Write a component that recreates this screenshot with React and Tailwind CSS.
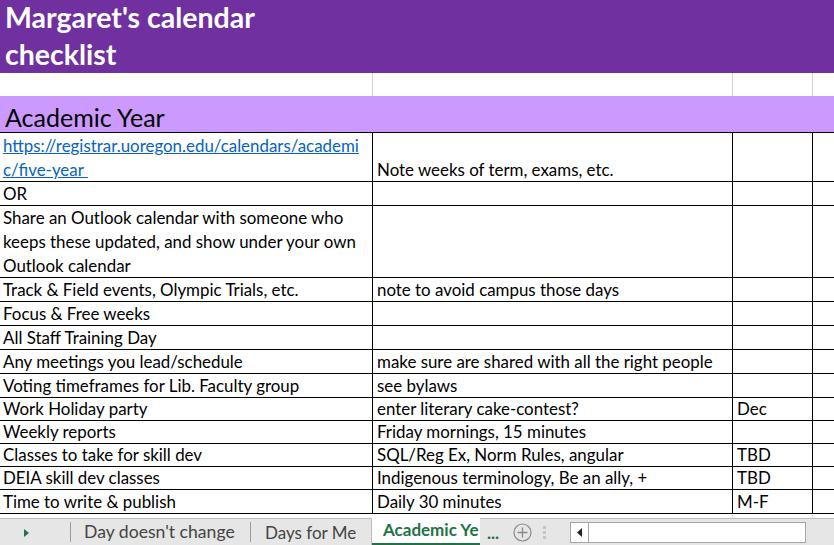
import React from "react";

const rows = [
  { h: 49, a: "link", b: "Note weeks of term, exams, etc." },
  { h: 24, a: "OR" },
  { h: 72, a: "share" },
  { h: 24, a: "Track & Field events, Olympic Trials, etc.", b: "note to avoid campus those days" },
  { h: 24, a: "Focus & Free weeks" },
  { h: 24, a: "All Staff Training Day" },
  { h: 24, a: "Any meetings you lead/schedule", b: "make sure are shared with all the right people" },
  { h: 24, a: "Voting timeframes for Lib. Faculty group", b: "see bylaws" },
  { h: 23, a: "Work Holiday party", b: "enter literary cake-contest?", c: "Dec" },
  { h: 23, a: "Weekly reports", b: "Friday mornings, 15 minutes" },
  { h: 23, a: "Classes to take for skill dev", b: "SQL/Reg Ex, Norm Rules, angular", c: "TBD" },
  { h: 23, a: "DEIA skill dev classes", b: "Indigenous terminology, Be an ally, +", c: "TBD" },
  { h: 24, a: "Time to write & publish", b: "Daily 30 minutes", c: "M-F" },
];

function Cell({ w, children }) {
  return (
    <div className={`${w} h-full shrink-0 flex items-end overflow-hidden border-r border-black pl-[3px] pr-[2px]`}>
      <div className="leading-[24px] w-full whitespace-nowrap translate-y-[1px]">{children}</div>
    </div>
  );
}

function firstCol(a) {
  if (a === "link") {
    return (
      <span className="text-[#0563C1] underline">
        https://registrar.uoregon.edu/calendars/academi
        <br />
        c/five-year&nbsp;
      </span>
    );
  }
  if (a === "share") {
    return (
      <>
        Share an Outlook calendar with someone who
        <br />
        keeps these updated, and show under your own
        <br />
        Outlook calendar
      </>
    );
  }
  return a;
}

export default function App() {
  return (
    <div
      className="w-[834px] h-[545px] overflow-hidden flex flex-col bg-white text-black text-[16.9px]"
      style={{ fontFamily: "Lato, 'Liberation Sans', sans-serif" }}
    >
      {/* title */}
      <div className="h-[73px] shrink-0 bg-[#7030A0] text-white font-bold text-[28.5px] leading-[37px] pl-[5px] flex flex-col justify-end">
        <div className="whitespace-nowrap">Margaret's calendar</div>
        <div>checklist</div>
      </div>

      {/* empty row */}
      <div className="h-[23px] shrink-0 flex">
        <div className="w-[373px] border-r border-[#d4d4d4]" />
        <div className="w-[360px] border-r border-[#d4d4d4]" />
        <div className="w-[80px] border-r border-[#d4d4d4]" />
        <div className="flex-1" />
      </div>

      {/* section header */}
      <div className="h-[36px] shrink-0 bg-[#CC99FF] text-[25px] leading-[30px] pl-[5px] flex items-end">
        Academic Year
      </div>

      {/* data */}
      <div className="border-t border-black shrink-0">
        {rows.map((r, i) => (
          <div key={i} className="flex border-b border-black" style={{ height: r.h }}>
            <Cell w="w-[373px]">{firstCol(r.a)}</Cell>
            <Cell w="w-[360px]">
              <span className="pl-[1px]">{r.b}</span>
            </Cell>
            <Cell w="w-[80px]">
              <span className="pl-[1px]">{r.c}</span>
            </Cell>
            <div className="flex-1" />
          </div>
        ))}
      </div>

      {/* partial row */}
      <div className="h-[4px] shrink-0 flex">
        <div className="w-[733px] border-r border-[#d4d4d4]" />
        <div className="w-[80px] border-r border-[#d4d4d4]" />
      </div>

      {/* sheet tabs */}
      <div className="flex-1 flex bg-[#e6e6e6] text-[17px] text-[#444] whitespace-nowrap">
        <div className="w-[70px] shrink-0 border-t border-[#bcbcbc] flex items-center justify-center">
          <svg width="8" height="10" viewBox="0 0 8 10" className="mt-[2px] ml-[-16px]">
            <path d="M1 1 L6 5 L1 9 Z" fill="#217346" />
          </svg>
        </div>
        <div className="w-[1px] shrink-0 border-t border-[#bcbcbc] flex items-center">
          <div className="w-[1px] h-[20px] bg-[#9b9b9b]" />
        </div>
        <div className="w-[179px] shrink-0 border-t border-[#bcbcbc] flex items-center pl-[13px] text-[17.6px]">
          Day doesn't change
        </div>
        <div className="w-[1px] shrink-0 border-t border-[#bcbcbc] flex items-center">
          <div className="w-[1px] h-[20px] bg-[#9b9b9b]" />
        </div>
        <div className="w-[121px] shrink-0 border-t border-[#bcbcbc] flex items-center pl-[14px] border-r border-r-[#bcbcbc]">
          Days for Me
        </div>
        <div className="w-[108px] shrink-0 bg-white border-b-[3px] border-[#217346] mt-[-4px] flex items-center pl-[11px] pt-[3px] overflow-hidden font-bold text-[#217346]">
          <span className="block w-[97px] overflow-hidden">Academic Ye</span>
        </div>
        <div className="w-[90px] shrink-0 border-t border-[#bcbcbc] flex items-center">
          <span className="ml-[7px] font-bold text-[#217346] leading-none">...</span>
          <svg width="19" height="19" viewBox="0 0 19 19" className="ml-[14px]">
            <circle cx="9.5" cy="9.5" r="8.5" fill="none" stroke="#8a8a8a" strokeWidth="1.2" />
            <path d="M9.5 4.5 V14.5 M4.5 9.5 H14.5" stroke="#8a8a8a" strokeWidth="1.3" />
          </svg>
          <div className="ml-[11px] flex flex-col gap-[2px]">
            <div className="w-[3px] h-[3px] bg-[#c4c4c4]" />
            <div className="w-[3px] h-[3px] bg-[#c4c4c4]" />
            <div className="w-[3px] h-[3px] bg-[#c4c4c4]" />
          </div>
        </div>
        <div className="flex-1 border-t border-[#bcbcbc] flex items-center">
          <div className="w-[236px] h-[21px] border border-[#a6a6a6] bg-white flex">
            <div className="w-[18px] border-r border-[#a6a6a6] flex items-center justify-center">
              <svg width="6" height="9" viewBox="0 0 6 9">
                <path d="M5 0 L0 4.5 L5 9 Z" fill="#222" />
              </svg>
            </div>
          </div>
        </div>
      </div>
    </div>
  );
}
